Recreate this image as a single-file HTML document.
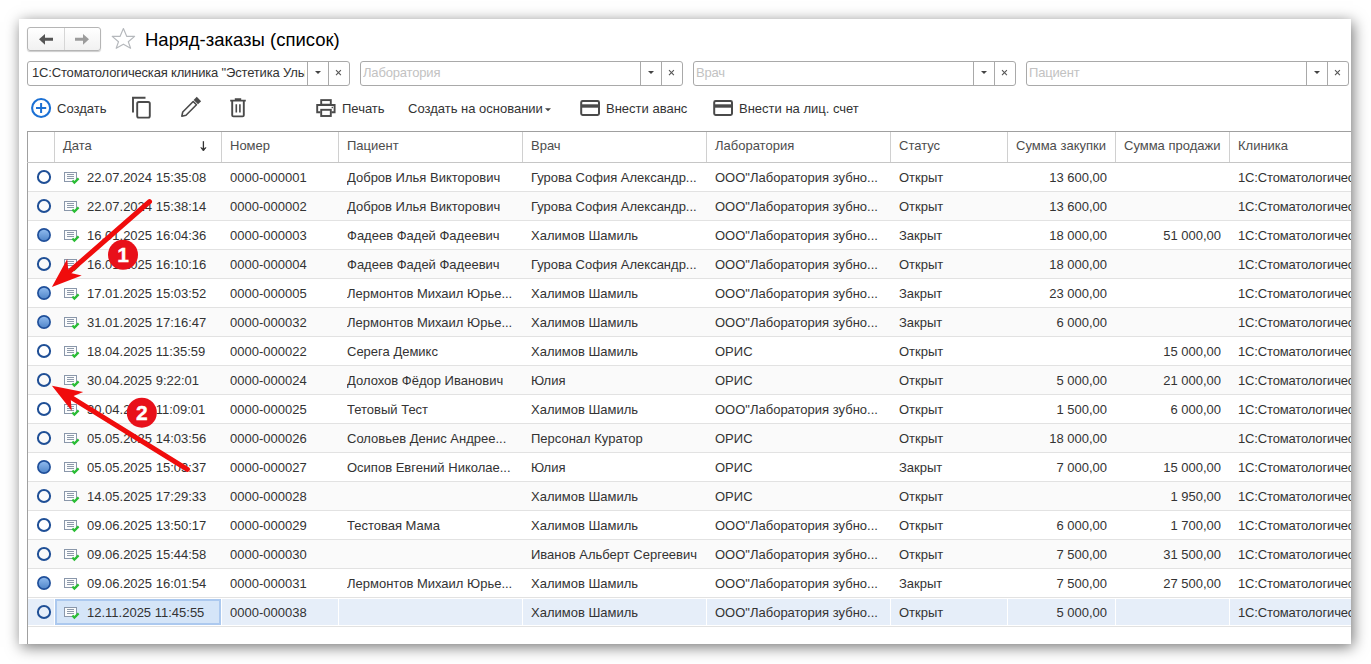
<!DOCTYPE html>
<html><head><meta charset="utf-8">
<style>
*{box-sizing:border-box;margin:0;padding:0}
html,body{width:1371px;height:664px;overflow:hidden;background:#fff;font-family:"Liberation Sans",sans-serif;color:#333;position:relative}
#win{position:absolute;left:19px;top:19px;width:1332px;height:625px;background:#fff;box-shadow:2px 3px 14px rgba(0,0,0,.55)}
#cover{position:absolute;left:1351px;top:0;width:20px;height:664px;background:transparent}
.abs{position:absolute}
#nav{position:absolute;left:27px;top:27px;width:74px;height:24px;border:1px solid #b5b5b5;border-radius:3px;background:linear-gradient(#fff,#f1f1f1);box-shadow:0 1px 1px rgba(0,0,0,.2)}
#nav svg{left:-1px;top:-1px}
#nav .ndiv{position:absolute;left:36px;top:0;width:1px;height:22px;background:#d6d6d6}
#title{position:absolute;left:145px;top:29px;font-size:18.5px;color:#000;white-space:nowrap}
.inp{position:absolute;top:61px;height:25px;border:1px solid #a9a9a9;border-radius:3px;background:#fff}
.inp .t{position:absolute;left:2px;top:3px;font-size:13px;letter-spacing:-0.17px;white-space:nowrap;overflow:hidden;color:#333}
.inp .ph{color:#c2c2c2}
.inp .dd{position:absolute;top:0;width:21px;height:23px;border-left:1px solid #a9a9a9}
.inp .cl{position:absolute;top:0;width:21px;height:23px;border-left:1px solid #a9a9a9}
.tb{position:absolute;top:101px;font-size:13px;color:#333;white-space:nowrap}
#grid{position:absolute;left:0;top:0;width:1351px;height:644px;overflow:hidden}
#grid:before{content:"";position:absolute;left:27px;top:131px;width:1px;height:513px;background:#a0a0a0}
.hdr{position:absolute;left:27px;top:131px;height:32px;width:1324px;border-top:1px solid #a0a0a0;border-bottom:1px solid #c6c6c6}
.hdr .vs{position:absolute;top:132px;width:1px;height:30px;background:#d0d0d0}
.hdr>*{margin-left:-27px;margin-top:-132px}
.hc{position:absolute;top:138px;font-size:13px;color:#4d4d4d;white-space:nowrap}
.row{position:absolute;left:28px;width:1323px;height:29px;border-bottom:1px solid #e2e2e2}
.row.alt{background:#fafafa}
.row.sel{background:#e6eef9;box-shadow:inset 0 1px 0 #fff,inset 0 -1px 0 #fff}
.wsep{position:absolute;top:0;width:1px;height:28px;background:#fff}
.cur{position:absolute;left:27px;top:1px;width:166px;height:26px;border:2px solid #acc9ef;background:#d5e5f8}
.c{position:absolute;top:7px;font-size:13px;color:#333;white-space:nowrap;overflow:hidden}
.r{text-align:right}
.badge{position:absolute;width:30px;height:30px;line-height:30px;text-align:center;color:#fff;font-weight:bold;font-size:21px;-webkit-text-stroke:0.4px #fff}

</style></head><body>
<div id="win"></div>
<div id="nav"><div class="ndiv"></div>
<svg class="abs" style="left:-1px;top:-1px" width="74" height="24" viewBox="0 0 74 24">
<path d="M12 12.3 L18 6.9 L18 10.8 L26 10.8 L26 13.8 L18 13.8 L18 17.7 Z" fill="#555"/>
<path d="M62 12.3 L56 6.9 L56 10.8 L48 10.8 L48 13.8 L56 13.8 L56 17.7 Z" fill="#9c9c9c"/>
</svg></div>
<svg class="abs" style="left:110px;top:26px" width="28" height="25" viewBox="0 0 28 25">
<path d="M13.4 2.6 L16.8 10.4 L24.6 10.4 L18.3 15.8 L20.6 22.3 L13.4 18.2 L6.2 22.3 L8.5 15.8 L2.2 10.4 L10 10.4 Z" fill="none" stroke="#b5b8bc" stroke-width="1.15" stroke-linejoin="round"/>
</svg>
<div id="title">Наряд-заказы (список)</div>
<div class="inp" style="left:27px;width:323px"><div class="t" style="width:273px;left:4px">1С:Стоматологическая клиника "Эстетика Улыбки"</div><div class="dd" style="left:279px"><svg width="21" height="23"><path d="M7 9 H13 L10 12 Z" fill="#444"/></svg></div><div class="cl" style="left:300px"><svg width="21" height="23"><path d="M7 8.2 L11.9 13.1 M11.9 8.2 L7 13.1" stroke="#555" stroke-width="1.1"/></svg></div></div>
<div class="inp" style="left:360px;width:323px"><div class="t ph" style="width:273px;left:2px">Лаборатория</div><div class="dd" style="left:279px"><svg width="21" height="23"><path d="M7 9 H13 L10 12 Z" fill="#444"/></svg></div><div class="cl" style="left:300px"><svg width="21" height="23"><path d="M7 8.2 L11.9 13.1 M11.9 8.2 L7 13.1" stroke="#555" stroke-width="1.1"/></svg></div></div>
<div class="inp" style="left:693px;width:323px"><div class="t ph" style="width:273px;left:2px">Врач</div><div class="dd" style="left:279px"><svg width="21" height="23"><path d="M7 9 H13 L10 12 Z" fill="#444"/></svg></div><div class="cl" style="left:300px"><svg width="21" height="23"><path d="M7 8.2 L11.9 13.1 M11.9 8.2 L7 13.1" stroke="#555" stroke-width="1.1"/></svg></div></div>
<div class="inp" style="left:1026px;width:323px"><div class="t ph" style="width:273px;left:2px">Пациент</div><div class="dd" style="left:279px"><svg width="21" height="23"><path d="M7 9 H13 L10 12 Z" fill="#444"/></svg></div><div class="cl" style="left:300px"><svg width="21" height="23"><path d="M7 8.2 L11.9 13.1 M11.9 8.2 L7 13.1" stroke="#555" stroke-width="1.1"/></svg></div></div>
<svg class="abs" style="left:0;top:90px" width="620" height="34" viewBox="0 90 620 34">
<circle cx="41.1" cy="108" r="9" fill="none" stroke="#1b70d4" stroke-width="2.1"/>
<path d="M36 108 H46.2 M41.1 102.9 V113.1" stroke="#1b70d4" stroke-width="2"/>
<path d="M133 112.5 V97.7 H145.5" fill="none" stroke="#4a4a4a" stroke-width="1.9"/>
<rect x="137.2" y="102" width="12.6" height="15.6" rx="1.6" fill="none" stroke="#4a4a4a" stroke-width="1.9"/>
<g transform="translate(181.4,116.6) rotate(-45)"><path d="M0.6 0 L4.2 -2.3 L19 -2.3 L19 2.3 L4.2 2.3 Z" fill="none" stroke="#4a4a4a" stroke-width="1.6" stroke-linejoin="round"/><rect x="20.4" y="-3.1" width="4.4" height="6.2" fill="#4a4a4a"/></g>
<path d="M230.2 100.6 H245.8 M234.8 99.2 H241.2" stroke="#4a4a4a" stroke-width="1.8"/>
<path d="M232.2 101 V115.2 Q232.2 116.4 233.4 116.4 H242.6 Q243.8 116.4 243.8 115.2 V101" fill="none" stroke="#4a4a4a" stroke-width="1.9"/>
<path d="M236.3 104.2 V112.4 M239.9 104.2 V112.4" stroke="#4a4a4a" stroke-width="1.6"/>
<rect x="321.2" y="100.1" width="9.6" height="4.6" fill="none" stroke="#4a4a4a" stroke-width="1.9"/>
<path d="M320.4 112.2 H317.2 V105 H334.6 V112.2 H331.4" fill="none" stroke="#4a4a4a" stroke-width="1.9"/>
<rect x="321.2" y="109.8" width="9.6" height="6.2" fill="none" stroke="#4a4a4a" stroke-width="1.9"/>
<rect x="331.6" y="106.8" width="1.4" height="1.4" fill="#4a4a4a"/>
<path d="M545 108.2 H551 L548 111.2 Z" fill="#444"/>
<rect x="581.2" y="101.1" width="17.8" height="13.8" rx="1.4" fill="none" stroke="#4a4a4a" stroke-width="2"/>
<rect x="581" y="104.3" width="18" height="3.4" fill="#4a4a4a"/>
</svg>
<svg class="abs" style="left:700px;top:90px" width="40" height="34" viewBox="700 90 40 34">
<rect x="714.2" y="101.1" width="17.8" height="13.8" rx="1.4" fill="none" stroke="#4a4a4a" stroke-width="2"/>
<rect x="714" y="104.3" width="18" height="3.4" fill="#4a4a4a"/>
</svg>
<div class="tb" style="left:57px">Создать</div>
<div class="tb" style="left:342px">Печать</div>
<div class="tb" style="left:408px">Создать на основании</div>
<div class="tb" style="left:606px">Внести аванс</div>
<div class="tb" style="left:739px">Внести на лиц. счет</div>
<div id="grid">
<div class="hdr">
<div class="vs" style="left:54px"></div>
<div class="vs" style="left:221px"></div>
<div class="vs" style="left:338px"></div>
<div class="vs" style="left:522px"></div>
<div class="vs" style="left:706px"></div>
<div class="vs" style="left:890px"></div>
<div class="vs" style="left:1007px"></div>
<div class="vs" style="left:1115px"></div>
<div class="vs" style="left:1229px"></div>
<div class="hc" style="left:63px">Дата</div>
<div class="hc" style="left:230px">Номер</div>
<div class="hc" style="left:347px">Пациент</div>
<div class="hc" style="left:531px">Врач</div>
<div class="hc" style="left:715px">Лаборатория</div>
<div class="hc" style="left:899px">Статус</div>
<div class="hc" style="left:1016px">Сумма закупки</div>
<div class="hc" style="left:1124px">Сумма продажи</div>
<div class="hc" style="left:1238px">Клиника</div>
<svg class="abs" style="left:196px;top:138px" width="14" height="16" viewBox="196 138 14 16"><path d="M203.4 141.2 V150" stroke="#333" stroke-width="1.3"/><path d="M200.8 147.6 L203.4 151 L206 147.6 L203.4 148.8 Z" fill="#333" stroke="#333" stroke-width="0.8" stroke-linejoin="round"/></svg>
</div>
<div class="row" style="top:163px">
<svg class="abs" style="left:8px;top:6px" width="16" height="16" viewBox="0 0 16 16"><circle cx="8" cy="8" r="6.1" fill="none" stroke="#1f4f96" stroke-width="2"/></svg>
<svg class="abs" style="left:34px;top:7px" width="20" height="15" viewBox="0 0 20 15"><rect x="2.5" y="2.5" width="12" height="9" fill="#fbfcfd" stroke="#8a97aa" stroke-width="1"/><path d="M5 4.5 H12 M5 6.5 H12 M5 8.5 H12" stroke="#8d99aa" stroke-width="1"/><path d="M10.4 10.4 L12.4 12.6 L16.6 8.4" fill="none" stroke="#2abd35" stroke-width="2.2"/></svg>
<div class="c" style="left:59px;width:130px">22.07.2024 15:35:08</div>
<div class="c" style="left:202px;width:104px">0000-000001</div>
<div class="c" style="left:319px;width:171px">Добров Илья Викторович</div>
<div class="c" style="left:503px;width:171px">Гурова София Александр...</div>
<div class="c" style="left:687px;width:171px">ООО"Лаборатория зубно...</div>
<div class="c" style="left:871px;width:104px">Открыт</div>
<div class="c r" style="right:244px">13 600,00</div>
<div class="c" style="left:1210px;letter-spacing:-0.15px">1С:Стоматологическая клиника "Эстетика Улыбки"</div>
</div>
<div class="row alt" style="top:192px">
<svg class="abs" style="left:8px;top:6px" width="16" height="16" viewBox="0 0 16 16"><circle cx="8" cy="8" r="6.1" fill="none" stroke="#1f4f96" stroke-width="2"/></svg>
<svg class="abs" style="left:34px;top:7px" width="20" height="15" viewBox="0 0 20 15"><rect x="2.5" y="2.5" width="12" height="9" fill="#fbfcfd" stroke="#8a97aa" stroke-width="1"/><path d="M5 4.5 H12 M5 6.5 H12 M5 8.5 H12" stroke="#8d99aa" stroke-width="1"/><path d="M10.4 10.4 L12.4 12.6 L16.6 8.4" fill="none" stroke="#2abd35" stroke-width="2.2"/></svg>
<div class="c" style="left:59px;width:130px">22.07.2024 15:38:14</div>
<div class="c" style="left:202px;width:104px">0000-000002</div>
<div class="c" style="left:319px;width:171px">Добров Илья Викторович</div>
<div class="c" style="left:503px;width:171px">Гурова София Александр...</div>
<div class="c" style="left:687px;width:171px">ООО"Лаборатория зубно...</div>
<div class="c" style="left:871px;width:104px">Открыт</div>
<div class="c r" style="right:244px">13 600,00</div>
<div class="c" style="left:1210px;letter-spacing:-0.15px">1С:Стоматологическая клиника "Эстетика Улыбки"</div>
</div>
<div class="row" style="top:221px">
<svg class="abs" style="left:8px;top:6px" width="16" height="16" viewBox="0 0 16 16"><defs><linearGradient id="g2" x1="0" y1="0" x2="0" y2="1"><stop offset="0" stop-color="#93bdf0"/><stop offset="1" stop-color="#4f84c8"/></linearGradient></defs><circle cx="8" cy="8" r="6.1" fill="url(#g2)" stroke="#1f4f9a" stroke-width="1.7"/></svg>
<svg class="abs" style="left:34px;top:7px" width="20" height="15" viewBox="0 0 20 15"><rect x="2.5" y="2.5" width="12" height="9" fill="#fbfcfd" stroke="#8a97aa" stroke-width="1"/><path d="M5 4.5 H12 M5 6.5 H12 M5 8.5 H12" stroke="#8d99aa" stroke-width="1"/><path d="M10.4 10.4 L12.4 12.6 L16.6 8.4" fill="none" stroke="#2abd35" stroke-width="2.2"/></svg>
<div class="c" style="left:59px;width:130px">16.01.2025 16:04:36</div>
<div class="c" style="left:202px;width:104px">0000-000003</div>
<div class="c" style="left:319px;width:171px">Фадеев Фадей Фадеевич</div>
<div class="c" style="left:503px;width:171px">Халимов Шамиль</div>
<div class="c" style="left:687px;width:171px">ООО"Лаборатория зубно...</div>
<div class="c" style="left:871px;width:104px">Закрыт</div>
<div class="c r" style="right:244px">18 000,00</div>
<div class="c r" style="right:130px">51 000,00</div>
<div class="c" style="left:1210px;letter-spacing:-0.15px">1С:Стоматологическая клиника "Эстетика Улыбки"</div>
</div>
<div class="row alt" style="top:250px">
<svg class="abs" style="left:8px;top:6px" width="16" height="16" viewBox="0 0 16 16"><circle cx="8" cy="8" r="6.1" fill="none" stroke="#1f4f96" stroke-width="2"/></svg>
<svg class="abs" style="left:34px;top:7px" width="20" height="15" viewBox="0 0 20 15"><rect x="2.5" y="2.5" width="12" height="9" fill="#fbfcfd" stroke="#8a97aa" stroke-width="1"/><path d="M5 4.5 H12 M5 6.5 H12 M5 8.5 H12" stroke="#8d99aa" stroke-width="1"/><path d="M10.4 10.4 L12.4 12.6 L16.6 8.4" fill="none" stroke="#2abd35" stroke-width="2.2"/></svg>
<div class="c" style="left:59px;width:130px">16.01.2025 16:10:16</div>
<div class="c" style="left:202px;width:104px">0000-000004</div>
<div class="c" style="left:319px;width:171px">Фадеев Фадей Фадеевич</div>
<div class="c" style="left:503px;width:171px">Гурова София Александр...</div>
<div class="c" style="left:687px;width:171px">ООО"Лаборатория зубно...</div>
<div class="c" style="left:871px;width:104px">Открыт</div>
<div class="c r" style="right:244px">18 000,00</div>
<div class="c" style="left:1210px;letter-spacing:-0.15px">1С:Стоматологическая клиника "Эстетика Улыбки"</div>
</div>
<div class="row" style="top:279px">
<svg class="abs" style="left:8px;top:6px" width="16" height="16" viewBox="0 0 16 16"><defs><linearGradient id="g4" x1="0" y1="0" x2="0" y2="1"><stop offset="0" stop-color="#93bdf0"/><stop offset="1" stop-color="#4f84c8"/></linearGradient></defs><circle cx="8" cy="8" r="6.1" fill="url(#g4)" stroke="#1f4f9a" stroke-width="1.7"/></svg>
<svg class="abs" style="left:34px;top:7px" width="20" height="15" viewBox="0 0 20 15"><rect x="2.5" y="2.5" width="12" height="9" fill="#fbfcfd" stroke="#8a97aa" stroke-width="1"/><path d="M5 4.5 H12 M5 6.5 H12 M5 8.5 H12" stroke="#8d99aa" stroke-width="1"/><path d="M10.4 10.4 L12.4 12.6 L16.6 8.4" fill="none" stroke="#2abd35" stroke-width="2.2"/></svg>
<div class="c" style="left:59px;width:130px">17.01.2025 15:03:52</div>
<div class="c" style="left:202px;width:104px">0000-000005</div>
<div class="c" style="left:319px;width:171px">Лермонтов Михаил Юрье...</div>
<div class="c" style="left:503px;width:171px">Халимов Шамиль</div>
<div class="c" style="left:687px;width:171px">ООО"Лаборатория зубно...</div>
<div class="c" style="left:871px;width:104px">Закрыт</div>
<div class="c r" style="right:244px">23 000,00</div>
<div class="c" style="left:1210px;letter-spacing:-0.15px">1С:Стоматологическая клиника "Эстетика Улыбки"</div>
</div>
<div class="row alt" style="top:308px">
<svg class="abs" style="left:8px;top:6px" width="16" height="16" viewBox="0 0 16 16"><defs><linearGradient id="g5" x1="0" y1="0" x2="0" y2="1"><stop offset="0" stop-color="#93bdf0"/><stop offset="1" stop-color="#4f84c8"/></linearGradient></defs><circle cx="8" cy="8" r="6.1" fill="url(#g5)" stroke="#1f4f9a" stroke-width="1.7"/></svg>
<svg class="abs" style="left:34px;top:7px" width="20" height="15" viewBox="0 0 20 15"><rect x="2.5" y="2.5" width="12" height="9" fill="#fbfcfd" stroke="#8a97aa" stroke-width="1"/><path d="M5 4.5 H12 M5 6.5 H12 M5 8.5 H12" stroke="#8d99aa" stroke-width="1"/><path d="M10.4 10.4 L12.4 12.6 L16.6 8.4" fill="none" stroke="#2abd35" stroke-width="2.2"/></svg>
<div class="c" style="left:59px;width:130px">31.01.2025 17:16:47</div>
<div class="c" style="left:202px;width:104px">0000-000032</div>
<div class="c" style="left:319px;width:171px">Лермонтов Михаил Юрье...</div>
<div class="c" style="left:503px;width:171px">Халимов Шамиль</div>
<div class="c" style="left:687px;width:171px">ООО"Лаборатория зубно...</div>
<div class="c" style="left:871px;width:104px">Закрыт</div>
<div class="c r" style="right:244px">6 000,00</div>
<div class="c" style="left:1210px;letter-spacing:-0.15px">1С:Стоматологическая клиника "Эстетика Улыбки"</div>
</div>
<div class="row" style="top:337px">
<svg class="abs" style="left:8px;top:6px" width="16" height="16" viewBox="0 0 16 16"><circle cx="8" cy="8" r="6.1" fill="none" stroke="#1f4f96" stroke-width="2"/></svg>
<svg class="abs" style="left:34px;top:7px" width="20" height="15" viewBox="0 0 20 15"><rect x="2.5" y="2.5" width="12" height="9" fill="#fbfcfd" stroke="#8a97aa" stroke-width="1"/><path d="M5 4.5 H12 M5 6.5 H12 M5 8.5 H12" stroke="#8d99aa" stroke-width="1"/><path d="M10.4 10.4 L12.4 12.6 L16.6 8.4" fill="none" stroke="#2abd35" stroke-width="2.2"/></svg>
<div class="c" style="left:59px;width:130px">18.04.2025 11:35:59</div>
<div class="c" style="left:202px;width:104px">0000-000022</div>
<div class="c" style="left:319px;width:171px">Серега Демикс</div>
<div class="c" style="left:503px;width:171px">Халимов Шамиль</div>
<div class="c" style="left:687px;width:171px">ОРИС</div>
<div class="c" style="left:871px;width:104px">Открыт</div>
<div class="c r" style="right:130px">15 000,00</div>
<div class="c" style="left:1210px;letter-spacing:-0.15px">1С:Стоматологическая клиника "Эстетика Улыбки"</div>
</div>
<div class="row alt" style="top:366px">
<svg class="abs" style="left:8px;top:6px" width="16" height="16" viewBox="0 0 16 16"><circle cx="8" cy="8" r="6.1" fill="none" stroke="#1f4f96" stroke-width="2"/></svg>
<svg class="abs" style="left:34px;top:7px" width="20" height="15" viewBox="0 0 20 15"><rect x="2.5" y="2.5" width="12" height="9" fill="#fbfcfd" stroke="#8a97aa" stroke-width="1"/><path d="M5 4.5 H12 M5 6.5 H12 M5 8.5 H12" stroke="#8d99aa" stroke-width="1"/><path d="M10.4 10.4 L12.4 12.6 L16.6 8.4" fill="none" stroke="#2abd35" stroke-width="2.2"/></svg>
<div class="c" style="left:59px;width:130px">30.04.2025 9:22:01</div>
<div class="c" style="left:202px;width:104px">0000-000024</div>
<div class="c" style="left:319px;width:171px">Долохов Фёдор Иванович</div>
<div class="c" style="left:503px;width:171px">Юлия</div>
<div class="c" style="left:687px;width:171px">ОРИС</div>
<div class="c" style="left:871px;width:104px">Открыт</div>
<div class="c r" style="right:244px">5 000,00</div>
<div class="c r" style="right:130px">21 000,00</div>
<div class="c" style="left:1210px;letter-spacing:-0.15px">1С:Стоматологическая клиника "Эстетика Улыбки"</div>
</div>
<div class="row" style="top:395px">
<svg class="abs" style="left:8px;top:6px" width="16" height="16" viewBox="0 0 16 16"><circle cx="8" cy="8" r="6.1" fill="none" stroke="#1f4f96" stroke-width="2"/></svg>
<svg class="abs" style="left:34px;top:7px" width="20" height="15" viewBox="0 0 20 15"><rect x="2.5" y="2.5" width="12" height="9" fill="#fbfcfd" stroke="#8a97aa" stroke-width="1"/><path d="M5 4.5 H12 M5 6.5 H12 M5 8.5 H12" stroke="#8d99aa" stroke-width="1"/><path d="M10.4 10.4 L12.4 12.6 L16.6 8.4" fill="none" stroke="#2abd35" stroke-width="2.2"/></svg>
<div class="c" style="left:59px;width:130px">30.04.2025 11:09:01</div>
<div class="c" style="left:202px;width:104px">0000-000025</div>
<div class="c" style="left:319px;width:171px">Тетовый Тест</div>
<div class="c" style="left:503px;width:171px">Халимов Шамиль</div>
<div class="c" style="left:687px;width:171px">ООО"Лаборатория зубно...</div>
<div class="c" style="left:871px;width:104px">Открыт</div>
<div class="c r" style="right:244px">1 500,00</div>
<div class="c r" style="right:130px">6 000,00</div>
<div class="c" style="left:1210px;letter-spacing:-0.15px">1С:Стоматологическая клиника "Эстетика Улыбки"</div>
</div>
<div class="row alt" style="top:424px">
<svg class="abs" style="left:8px;top:6px" width="16" height="16" viewBox="0 0 16 16"><circle cx="8" cy="8" r="6.1" fill="none" stroke="#1f4f96" stroke-width="2"/></svg>
<svg class="abs" style="left:34px;top:7px" width="20" height="15" viewBox="0 0 20 15"><rect x="2.5" y="2.5" width="12" height="9" fill="#fbfcfd" stroke="#8a97aa" stroke-width="1"/><path d="M5 4.5 H12 M5 6.5 H12 M5 8.5 H12" stroke="#8d99aa" stroke-width="1"/><path d="M10.4 10.4 L12.4 12.6 L16.6 8.4" fill="none" stroke="#2abd35" stroke-width="2.2"/></svg>
<div class="c" style="left:59px;width:130px">05.05.2025 14:03:56</div>
<div class="c" style="left:202px;width:104px">0000-000026</div>
<div class="c" style="left:319px;width:171px">Соловьев Денис Андрее...</div>
<div class="c" style="left:503px;width:171px">Персонал Куратор</div>
<div class="c" style="left:687px;width:171px">ОРИС</div>
<div class="c" style="left:871px;width:104px">Открыт</div>
<div class="c r" style="right:244px">18 000,00</div>
<div class="c" style="left:1210px;letter-spacing:-0.15px">1С:Стоматологическая клиника "Эстетика Улыбки"</div>
</div>
<div class="row" style="top:453px">
<svg class="abs" style="left:8px;top:6px" width="16" height="16" viewBox="0 0 16 16"><defs><linearGradient id="g10" x1="0" y1="0" x2="0" y2="1"><stop offset="0" stop-color="#93bdf0"/><stop offset="1" stop-color="#4f84c8"/></linearGradient></defs><circle cx="8" cy="8" r="6.1" fill="url(#g10)" stroke="#1f4f9a" stroke-width="1.7"/></svg>
<svg class="abs" style="left:34px;top:7px" width="20" height="15" viewBox="0 0 20 15"><rect x="2.5" y="2.5" width="12" height="9" fill="#fbfcfd" stroke="#8a97aa" stroke-width="1"/><path d="M5 4.5 H12 M5 6.5 H12 M5 8.5 H12" stroke="#8d99aa" stroke-width="1"/><path d="M10.4 10.4 L12.4 12.6 L16.6 8.4" fill="none" stroke="#2abd35" stroke-width="2.2"/></svg>
<div class="c" style="left:59px;width:130px">05.05.2025 15:03:37</div>
<div class="c" style="left:202px;width:104px">0000-000027</div>
<div class="c" style="left:319px;width:171px">Осипов Евгений Николае...</div>
<div class="c" style="left:503px;width:171px">Юлия</div>
<div class="c" style="left:687px;width:171px">ОРИС</div>
<div class="c" style="left:871px;width:104px">Закрыт</div>
<div class="c r" style="right:244px">7 000,00</div>
<div class="c r" style="right:130px">15 000,00</div>
<div class="c" style="left:1210px;letter-spacing:-0.15px">1С:Стоматологическая клиника "Эстетика Улыбки"</div>
</div>
<div class="row alt" style="top:482px">
<svg class="abs" style="left:8px;top:6px" width="16" height="16" viewBox="0 0 16 16"><circle cx="8" cy="8" r="6.1" fill="none" stroke="#1f4f96" stroke-width="2"/></svg>
<svg class="abs" style="left:34px;top:7px" width="20" height="15" viewBox="0 0 20 15"><rect x="2.5" y="2.5" width="12" height="9" fill="#fbfcfd" stroke="#8a97aa" stroke-width="1"/><path d="M5 4.5 H12 M5 6.5 H12 M5 8.5 H12" stroke="#8d99aa" stroke-width="1"/><path d="M10.4 10.4 L12.4 12.6 L16.6 8.4" fill="none" stroke="#2abd35" stroke-width="2.2"/></svg>
<div class="c" style="left:59px;width:130px">14.05.2025 17:29:33</div>
<div class="c" style="left:202px;width:104px">0000-000028</div>
<div class="c" style="left:319px;width:171px"></div>
<div class="c" style="left:503px;width:171px">Халимов Шамиль</div>
<div class="c" style="left:687px;width:171px">ОРИС</div>
<div class="c" style="left:871px;width:104px">Открыт</div>
<div class="c r" style="right:130px">1 950,00</div>
<div class="c" style="left:1210px;letter-spacing:-0.15px">1С:Стоматологическая клиника "Эстетика Улыбки"</div>
</div>
<div class="row" style="top:511px">
<svg class="abs" style="left:8px;top:6px" width="16" height="16" viewBox="0 0 16 16"><circle cx="8" cy="8" r="6.1" fill="none" stroke="#1f4f96" stroke-width="2"/></svg>
<svg class="abs" style="left:34px;top:7px" width="20" height="15" viewBox="0 0 20 15"><rect x="2.5" y="2.5" width="12" height="9" fill="#fbfcfd" stroke="#8a97aa" stroke-width="1"/><path d="M5 4.5 H12 M5 6.5 H12 M5 8.5 H12" stroke="#8d99aa" stroke-width="1"/><path d="M10.4 10.4 L12.4 12.6 L16.6 8.4" fill="none" stroke="#2abd35" stroke-width="2.2"/></svg>
<div class="c" style="left:59px;width:130px">09.06.2025 13:50:17</div>
<div class="c" style="left:202px;width:104px">0000-000029</div>
<div class="c" style="left:319px;width:171px">Тестовая Мама</div>
<div class="c" style="left:503px;width:171px">Халимов Шамиль</div>
<div class="c" style="left:687px;width:171px">ООО"Лаборатория зубно...</div>
<div class="c" style="left:871px;width:104px">Открыт</div>
<div class="c r" style="right:244px">6 000,00</div>
<div class="c r" style="right:130px">1 700,00</div>
<div class="c" style="left:1210px;letter-spacing:-0.15px">1С:Стоматологическая клиника "Эстетика Улыбки"</div>
</div>
<div class="row alt" style="top:540px">
<svg class="abs" style="left:8px;top:6px" width="16" height="16" viewBox="0 0 16 16"><circle cx="8" cy="8" r="6.1" fill="none" stroke="#1f4f96" stroke-width="2"/></svg>
<svg class="abs" style="left:34px;top:7px" width="20" height="15" viewBox="0 0 20 15"><rect x="2.5" y="2.5" width="12" height="9" fill="#fbfcfd" stroke="#8a97aa" stroke-width="1"/><path d="M5 4.5 H12 M5 6.5 H12 M5 8.5 H12" stroke="#8d99aa" stroke-width="1"/><path d="M10.4 10.4 L12.4 12.6 L16.6 8.4" fill="none" stroke="#2abd35" stroke-width="2.2"/></svg>
<div class="c" style="left:59px;width:130px">09.06.2025 15:44:58</div>
<div class="c" style="left:202px;width:104px">0000-000030</div>
<div class="c" style="left:319px;width:171px"></div>
<div class="c" style="left:503px;width:171px">Иванов Альберт Сергеевич</div>
<div class="c" style="left:687px;width:171px">ООО"Лаборатория зубно...</div>
<div class="c" style="left:871px;width:104px">Открыт</div>
<div class="c r" style="right:244px">7 500,00</div>
<div class="c r" style="right:130px">31 500,00</div>
<div class="c" style="left:1210px;letter-spacing:-0.15px">1С:Стоматологическая клиника "Эстетика Улыбки"</div>
</div>
<div class="row" style="top:569px">
<svg class="abs" style="left:8px;top:6px" width="16" height="16" viewBox="0 0 16 16"><defs><linearGradient id="g14" x1="0" y1="0" x2="0" y2="1"><stop offset="0" stop-color="#93bdf0"/><stop offset="1" stop-color="#4f84c8"/></linearGradient></defs><circle cx="8" cy="8" r="6.1" fill="url(#g14)" stroke="#1f4f9a" stroke-width="1.7"/></svg>
<svg class="abs" style="left:34px;top:7px" width="20" height="15" viewBox="0 0 20 15"><rect x="2.5" y="2.5" width="12" height="9" fill="#fbfcfd" stroke="#8a97aa" stroke-width="1"/><path d="M5 4.5 H12 M5 6.5 H12 M5 8.5 H12" stroke="#8d99aa" stroke-width="1"/><path d="M10.4 10.4 L12.4 12.6 L16.6 8.4" fill="none" stroke="#2abd35" stroke-width="2.2"/></svg>
<div class="c" style="left:59px;width:130px">09.06.2025 16:01:54</div>
<div class="c" style="left:202px;width:104px">0000-000031</div>
<div class="c" style="left:319px;width:171px">Лермонтов Михаил Юрье...</div>
<div class="c" style="left:503px;width:171px">Халимов Шамиль</div>
<div class="c" style="left:687px;width:171px">ООО"Лаборатория зубно...</div>
<div class="c" style="left:871px;width:104px">Закрыт</div>
<div class="c r" style="right:244px">7 500,00</div>
<div class="c r" style="right:130px">27 500,00</div>
<div class="c" style="left:1210px;letter-spacing:-0.15px">1С:Стоматологическая клиника "Эстетика Улыбки"</div>
</div>
<div class="row alt sel" style="top:598px">
<div class="wsep" style="left:26px"></div>
<div class="wsep" style="left:193px"></div>
<div class="wsep" style="left:310px"></div>
<div class="wsep" style="left:494px"></div>
<div class="wsep" style="left:678px"></div>
<div class="wsep" style="left:862px"></div>
<div class="wsep" style="left:979px"></div>
<div class="wsep" style="left:1087px"></div>
<div class="wsep" style="left:1201px"></div>
<div class="cur"></div>
<svg class="abs" style="left:8px;top:6px" width="16" height="16" viewBox="0 0 16 16"><circle cx="8" cy="8" r="6.1" fill="none" stroke="#1f4f96" stroke-width="2"/></svg>
<svg class="abs" style="left:34px;top:7px" width="20" height="15" viewBox="0 0 20 15"><rect x="2.5" y="2.5" width="12" height="9" fill="#fbfcfd" stroke="#8a97aa" stroke-width="1"/><path d="M5 4.5 H12 M5 6.5 H12 M5 8.5 H12" stroke="#8d99aa" stroke-width="1"/><path d="M10.4 10.4 L12.4 12.6 L16.6 8.4" fill="none" stroke="#2abd35" stroke-width="2.2"/></svg>
<div class="c" style="left:59px;width:130px">12.11.2025 11:45:55</div>
<div class="c" style="left:202px;width:104px">0000-000038</div>
<div class="c" style="left:319px;width:171px"></div>
<div class="c" style="left:503px;width:171px">Халимов Шамиль</div>
<div class="c" style="left:687px;width:171px">ООО"Лаборатория зубно...</div>
<div class="c" style="left:871px;width:104px">Открыт</div>
<div class="c r" style="right:244px">5 000,00</div>
<div class="c" style="left:1210px;letter-spacing:-0.15px">1С:Стоматологическая клиника "Эстетика Улыбки"</div>
</div>
</div>
<div id="cover"></div>
<svg class="abs" style="left:0;top:0" width="1371" height="664" viewBox="0 0 1371 664"><path d="M149.5 201.6 L67.7 273.2" stroke="#f00c0c" stroke-width="5" stroke-linecap="round"/><path d="M51.9 287.0 L67.2 259.0 L68.5 272.5 L81.7 275.5 Z" fill="#f00c0c"/><path d="M187.4 469.3 L69.8 396.7" stroke="#f00c0c" stroke-width="5" stroke-linecap="round"/><path d="M51.9 385.7 L83.2 392.1 L70.6 397.3 L71.7 410.8 Z" fill="#f00c0c"/><circle cx="123" cy="254.8" r="15" fill="#e8101a"/><circle cx="141.8" cy="412.7" r="15" fill="#e8101a"/></svg>
<div class="badge" style="left:108px;top:239.8px">1</div>
<div class="badge" style="left:126.8px;top:397.7px">2</div>
</body></html>
